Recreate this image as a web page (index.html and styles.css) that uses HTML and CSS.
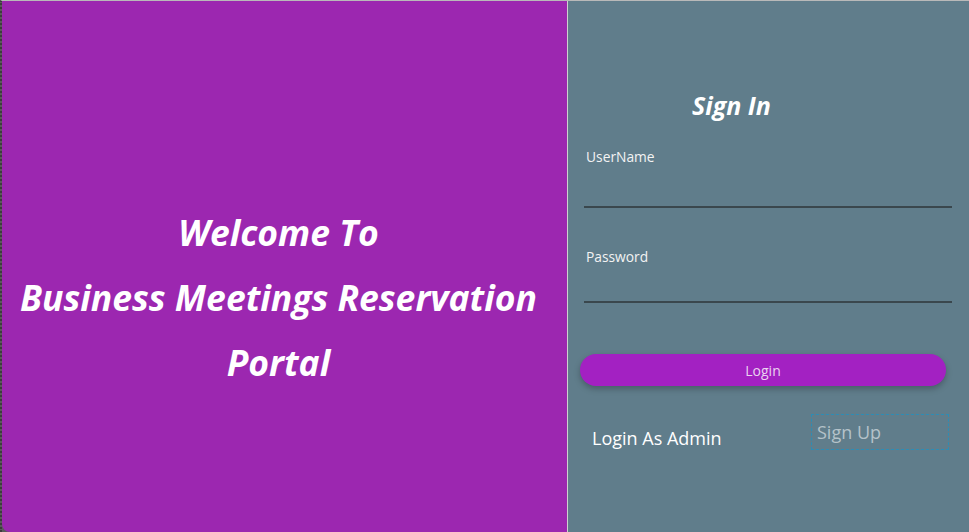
FILE: index.html
```html
<!DOCTYPE html>
<html>
<head>
<meta charset="utf-8">
<link rel="stylesheet" href="styles.css">
</head>
<body>
<div class="page">
  <section class="welcome">
    <h1 class="welcome-title">Welcome To<br>Business Meetings Reservation<br>Portal</h1>
  </section>
  <section class="signin">
    <h2 class="signin-title">Sign In</h2>
    <div class="field">
      <label class="field-label">UserName</label>
      <div class="field-input"></div>
    </div>
    <div class="field field-pw">
      <label class="field-label">Password</label>
      <div class="field-input"></div>
    </div>
    <button class="login-btn">Login</button>
    <div class="links">
      <span class="admin-link">Login As Admin</span>
      <span class="signup-link">Sign Up</span>
    </div>
  </section>
</div>
</body>
</html>
```
FILE: styles.css
```css
html, body {
  margin: 0;
  padding: 0;
  background: #5a5a5a;
}
.page {
  display: flex;
  width: 969px;
  height: 532px;
  box-sizing: border-box;
  border-top: 1px solid #b9b9b9;
  border-left: 2px dotted #3c3c3c;
  font-family: "Open Sans", "Noto Sans", sans-serif;
}
.welcome {
  flex: 0 0 565px;
  background: #9c27b0;
  border-bottom-left-radius: 8px;
  display: flex;
  align-items: center;
  justify-content: center;
}
.welcome-title {
  margin: 62px 12px 0 0;
  color: #fff;
  font-size: 35.5px;
  font-weight: 700;
  font-style: italic;
  line-height: 65px;
  text-align: center;
  letter-spacing: 0;
}
.signin {
  flex: 1;
  background: #607d8b;
  border-left: 1px solid #d0d0d0;
  display: flex;
  flex-direction: column;
  padding: 0 17px 0 12px;
}
.signin-title {
  margin: 86px 0 0 112px;
  color: #fff;
  font-size: 25px;
  font-weight: 700;
  font-style: italic;
  line-height: 36px;
  letter-spacing: 0;
}
.field {
  margin: 25px 0 0 4px;
  display: flex;
  flex-direction: column;
}
.field-pw {
  margin-top: 40px;
}
.field-label {
  color: #f3f3f3;
  font-size: 13.8px;
  line-height: 18px;
  margin-left: 2px;
}
.field-input {
  height: 40px;
  border-bottom: 2px solid #3a474d;
}
.field-pw .field-input {
  height: 35px;
}
.login-btn {
  margin-top: 51px;
  height: 32px;
  border: none;
  border-radius: 16px;
  background: #a321c2;
  color: #ead3f0;
  font-family: inherit;
  font-size: 14px;
  box-shadow: 0 3px 6px rgba(0, 0, 0, 0.25);
  width: 366px;
}
.links {
  margin-top: 28px;
  display: flex;
  align-items: flex-start;
  justify-content: space-between;
}
.admin-link {
  margin: 12px 0 0 12px;
  color: #fff;
  font-size: 18px;
  line-height: 24px;
}
.signup-link {
  width: 131px;
  height: 34px;
  border: 1px dashed #2c8db5;
  color: #b4c2c9;
  font-size: 18px;
  line-height: 34px;
  padding-left: 5px;
  box-sizing: content-box;
  margin-right: 3px;
}
```
